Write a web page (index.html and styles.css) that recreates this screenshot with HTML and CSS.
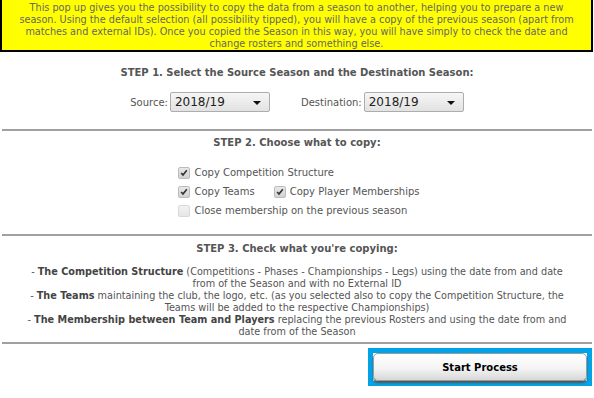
FILE: index.html
```html
<!DOCTYPE html>
<html lang="en">
<head>
  <meta charset="UTF-8">
  <title>Copy Season</title>
  <link rel="stylesheet" href="styles.css">
</head>
<body>

  <div class="popup">
    <!-- Info box -->
    <div class="notice">
      This pop up gives you the possibility to copy the data from a season to another, helping you to prepare a new<br>
      season. Using the default selection (all possibility tipped), you will have a copy of the previous season (apart from<br>
      matches and external IDs). Once you copied the Season in this way, you will have simply to check the date and<br>
      change rosters and something else.
    </div>

    <!-- Step 1 -->
    <div class="step step-one">
      <div class="step-title">STEP 1. Select the Source Season and the Destination Season:</div>
      <div class="season-row">
        <label class="season-field">
          Source:
          <span class="select-box">2018/19<span class="arrow"></span></span>
        </label>
        <label class="season-field">
          Destination:
          <span class="select-box">2018/19<span class="arrow"></span></span>
        </label>
      </div>
    </div>
    <hr class="divider">

    <!-- Step 2 -->
    <div class="step step-two">
      <div class="step-title">STEP 2. Choose what to copy:</div>
      <div class="options">
        <div class="option-row">
          <span class="check checked"><svg viewBox="0 0 12 12"><path d="M2.6 6 L4.8 8.4 L9.4 2.8" /></svg></span>
          <span>Copy Competition Structure</span>
        </div>
        <div class="option-row">
          <span class="check checked"><svg viewBox="0 0 12 12"><path d="M2.6 6 L4.8 8.4 L9.4 2.8" /></svg></span>
          <span>Copy Teams</span>
          <span class="check checked second"><svg viewBox="0 0 12 12"><path d="M2.6 6 L4.8 8.4 L9.4 2.8" /></svg></span>
          <span>Copy Player Memberships</span>
        </div>
        <div class="option-row">
          <span class="check disabled"></span>
          <span>Close membership on the previous season</span>
        </div>
      </div>
    </div>
    <hr class="divider">

    <!-- Step 3 -->
    <div class="step step-three">
      <div class="step-title">STEP 3. Check what you're copying:</div>
      <p class="summary">
        - <b>The Competition Structure</b> (Competitions - Phases - Championships - Legs) using the date from and date<br>
        from of the Season and with no External ID<br>
        - <b>The Teams</b> maintaining the club, the logo, etc. (as you selected also to copy the Competition Structure, the<br>
        Teams will be added to the respective Championships)<br>
        - <b>The Membership between Team and Players</b> replacing the previous Rosters and using the date from and<br>
        date from of the Season
      </p>
    </div>
    <hr class="divider">

    <div class="actions">
      <div class="focus-ring">
        <button type="button" class="start-btn">Start Process</button>
      </div>
    </div>
  </div>

</body>
</html>
```

FILE: styles.css
```css
body {
  margin: 0;
  padding: 0;
  font-family: "DejaVu Sans", Verdana, sans-serif;
  font-size: 10px;
  color: #555;
  background: #fff;
}

.popup {
  width: 594px;
}

.notice { /* yellow help box */
  background: #ffff00;
  border: 2px solid #000;
  border-top: none;
  width: 589px;
  text-align: center;
  white-space: nowrap;
  font-size: 9.7px;
  line-height: 12px;
  padding: 2px 0 0;
  color: #666;
}

.step {
  text-align: center;
}

.step-title {
  font-weight: bold;
  line-height: 12px;
}

.step-one {
  padding: 15px 0 17px;
}

.season-row {
  margin-top: 13px;
  display: flex;
  justify-content: center;
  gap: 31px;
}

.season-field {
  display: flex;
  align-items: center;
  gap: 2px;
}

.select-box { /* fake windows style select */
  position: relative;
  display: inline-block;
  box-sizing: border-box;
  width: 100px;
  height: 20px;
  line-height: 18px;
  padding-left: 4px;
  text-align: left;
  font-size: 12px;
  color: #222;
  border: 1px solid #adadad;
  border-radius: 2px;
  background: linear-gradient(#f6f6f6, #e2e2e2);
}

.select-box .arrow {
  position: absolute;
  right: 8px;
  top: 8px;
  border-left: 4px solid transparent;
  border-right: 4px solid transparent;
  border-top: 4px solid #111;
}

.divider {
  margin: 0 0 0 2px;
  width: 590px;
  height: 0;
  border: none;
  border-top: 2px solid #a0a0a0;
}

.step-two {
  padding: 6px 0 14px;
}

.options {
  display: inline-block;
  text-align: left;
  margin-top: 14px;
  margin-left: 4px;
}

.option-row {
  display: flex;
  align-items: center;
  height: 19px;
}

.check {
  box-sizing: border-box;
  width: 12px;
  height: 12px;
  margin-right: 4px;
  border: 1px solid #bcbcbc;
  border-radius: 2px;
  background: linear-gradient(#e8e8e8, #d2d2d2);
}

.check svg {
  display: block;
  width: 10px;
  height: 10px;
}

.check path {
  fill: none;
  stroke: #333;
  stroke-width: 2;
}

.check.second {
  margin-left: 19px;
}

.check.disabled {
  border-color: #d8d8d8;
  background: linear-gradient(#f2f2f2, #e6e6e6);
}

.step-three {
  padding: 7px 0 4px;
}

.summary {
  margin: 11px 0 0;
  white-space: nowrap;
  font-size: 9.7px;
  line-height: 12px;
}

.summary b {
  color: #444;
}

.actions {
  display: flex;
  justify-content: flex-end;
  padding: 4px 2px 0 0;
}

.focus-ring { /* blue highlight round the button */
  border: 5px solid #00a2e8;
  background: #fff;
  width: 214px;
}

.start-btn {
  display: block;
  width: 214px;
  height: 28px;
  margin: 0;
  border: 1px solid #9a9a9a;
  border-radius: 5px;
  background: linear-gradient(#ffffff 0%, #f4f4f4 55%, #d8d8d8 100%);
  box-shadow: 0 2px 2px #555;
  font-family: "DejaVu Sans", Verdana, sans-serif;
  font-size: 10px;
  font-weight: bold;
  color: #000;
  cursor: pointer;
}
```
